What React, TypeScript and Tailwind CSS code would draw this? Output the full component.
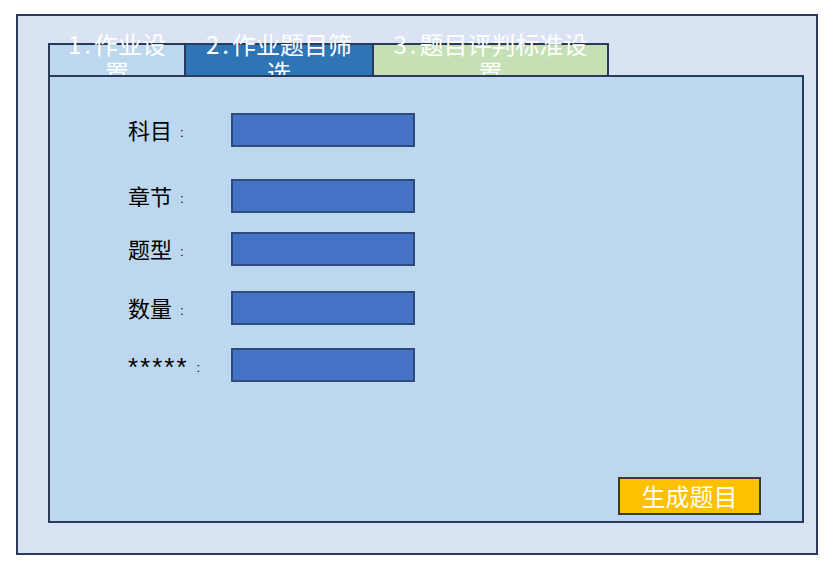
import React from "react";

const font = { fontFamily: '"Liberation Sans", "Noto Sans CJK SC", sans-serif' };
const cjk = { fontFamily: '"Noto Sans CJK SC", "Liberation Sans", sans-serif' };

function Row({ label, mt, star }: { label: string; mt: string; star?: boolean }) {
  return (
    <div className={`flex items-center ${mt}`}>
      <div className="w-[103px] flex items-end text-[22px] leading-[28px] text-black -translate-y-[1px]">
        {star ? (
          <span className="text-[26px] tracking-[2px] translate-y-[3px] inline-block" style={font}>
            {label}
          </span>
        ) : (
          <span style={cjk}>{label}</span>
        )}
        <span className="text-[13px] leading-[20px] ml-[8px]" style={font}>:</span>
      </div>
      <div className="w-[184px] h-[34px] bg-[#4472c4] border-2 border-[#2f4b7c]" />
    </div>
  );
}

function Num({ n }: { n: string }) {
  return (
    <>
      {n}
      <span className="mx-[3px]">.</span>
    </>
  );
}

export default function App() {
  return (
    <div className="w-[832px] h-[568px] bg-white pl-[16px] pt-[14px]" style={font}>
      <div className="w-[802px] h-[541px] bg-[#dae3f3] border-2 border-[#2a3a5a] pl-[30px] pt-[27px]">
        <div className="flex h-[32px] text-white text-[24px] leading-[28px]" style={cjk}>
          <div className="w-[138px] h-[32px] bg-[#bdd7ee] border-2 border-b-0 border-[#2a3a5a] flex items-center justify-center text-center">
            <div className="whitespace-nowrap mb-[4px]"><Num n="1" />作业设<br />置</div>
          </div>
          <div className="w-[188px] h-[32px] bg-[#2e75b6] border-t-2 border-r-2 border-[#2a3a5a] flex items-center justify-center text-center">
            <div className="whitespace-nowrap mb-[4px]"><Num n="2" />作业题目筛<br />选</div>
          </div>
          <div className="w-[235px] h-[32px] bg-[#c5e0b4] border-t-2 border-r-2 border-[#2a3a5a] flex items-center justify-center text-center">
            <div className="whitespace-nowrap mb-[4px]"><Num n="3" />题目评判标准设<br />置</div>
          </div>
        </div>
        <div className="relative w-[756px] h-[448px] bg-[#bdd7ee] border-2 border-[#2a3a5a] flex flex-col pl-[78px]">
          <Row label="科目" mt="mt-[36px]" />
          <Row label="章节" mt="mt-[32px]" />
          <Row label="题型" mt="mt-[19px]" />
          <Row label="数量" mt="mt-[25px]" />
          <Row label="*****" mt="mt-[23px]" star />
          <div className="mt-auto flex justify-end pr-[41px] pb-[6px]">
            <div className="w-[143px] h-[38px] bg-[#ffc000] border-2 border-[#3a3a3a] flex items-center justify-center text-white text-[24px]" style={cjk}>
              生成题目
            </div>
          </div>
        </div>
      </div>
    </div>
  );
}
